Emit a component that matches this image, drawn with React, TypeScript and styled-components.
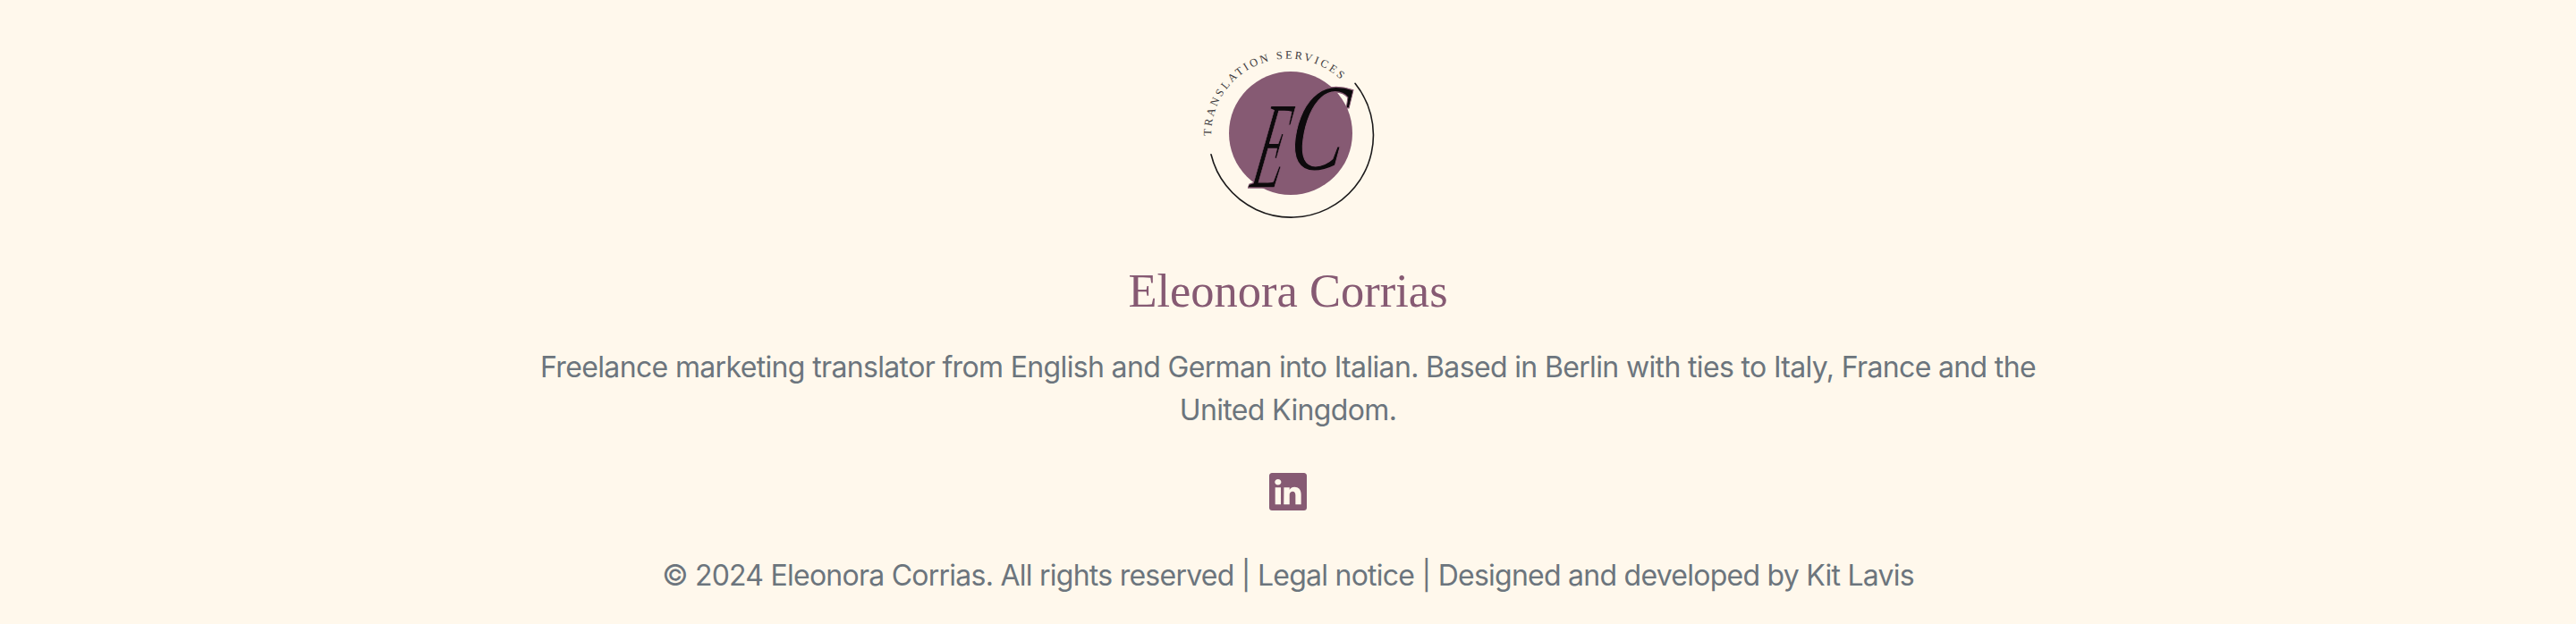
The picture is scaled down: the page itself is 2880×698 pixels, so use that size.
import React from 'react';
import styled, { createGlobalStyle } from 'styled-components';
import { BsLinkedin } from 'react-icons/bs';

const GlobalStyle = createGlobalStyle`
  html, body {
    margin: 0;
    padding: 0;
    background-color: #fff8ec;
  }
`;

const Footer = styled.footer`
  width: 100%;
  height: 698px;
  box-sizing: border-box;
  padding-top: 30px;
  background-color: #fff8ec;
  display: flex;
  flex-direction: column;
  align-items: center;
  text-align: center;
  font-family: Inter, "Liberation Sans", sans-serif;
  color: #6c757d;
`;

const LogoLink = styled.a`
  display: block;
  width: 240px;
  height: 230px;
`;

const LogoSvg = styled.svg`
  display: block;
  width: 240px;
  height: 230px;
`;

const ArcLabel = styled.text`
  font-family: "Liberation Serif", serif;
  font-size: 12.5px;
  fill: #3d3a3c;
`;

const Monogram = styled.text`
  font-family: "Liberation Serif", serif;
  font-style: italic;
  font-size: 140px;
  fill: #0d0a0c;
  stroke: #865a73;
  stroke-width: 1.4px;
`;

const Name = styled.h2`
  margin: 34px 0 0;
  font-family: "Liberation Serif", serif;
  font-weight: 400;
  font-size: 52.5px;
  line-height: 62px;
  color: #865a73;
`;

const Intro = styled.p`
  margin: 31px 0 0;
  max-width: 1700px;
  font-size: 32px;
  line-height: 48px;
  letter-spacing: -0.65px;
`;

const Socials = styled.div`
  margin-top: 46px;
  height: 42px;
  display: flex;
  justify-content: center;
  color: #865a73;
`;

const Copyright = styled.p`
  margin: 49px 0 0;
  font-size: 32px;
  line-height: 48px;
  letter-spacing: -0.75px;
`;

const Logo: React.FC = () => (
  <LogoLink href="#" aria-label="Eleonora Corrias">
    <LogoSvg viewBox="0 0 240 230">
      <defs>
        <path id="label-arc" d="M 34 122 A 86 86 0 0 1 180 60" fill="none" />
      </defs>
      <circle cx="123" cy="119" r="69" fill="#865a73" />
      <path
        d="M 195 63.3 A 92 92 0 1 1 34 142.7"
        fill="none"
        stroke="#1c1a1b"
        strokeWidth="1.6"
        strokeLinecap="round"
      />
      <ArcLabel>
        <textPath href="#label-arc" textLength="200" lengthAdjust="spacing">
          TRANSLATION SERVICES
        </textPath>
      </ArcLabel>
      <Monogram transform="translate(76 180) skewX(-12) scale(0.4 1)">E</Monogram>
      <Monogram transform="translate(118 160) skewX(-8) scale(0.66 1)">C</Monogram>
    </LogoSvg>
  </LogoLink>
);

const App: React.FC = () => {
  return (
    <>
      <GlobalStyle />
      <Footer>
        <Logo />
        <Name>Eleonora Corrias</Name>
        <Intro>
          Freelance marketing translator from English and German into Italian. Based in Berlin with ties to Italy, France and the United Kingdom.
        </Intro>
        <Socials>
          <BsLinkedin size={42} />
        </Socials>
        <Copyright>© 2024 Eleonora Corrias. All rights reserved | Legal notice | Designed and developed by Kit Lavis</Copyright>
      </Footer>
    </>
  );
};

export default App;
